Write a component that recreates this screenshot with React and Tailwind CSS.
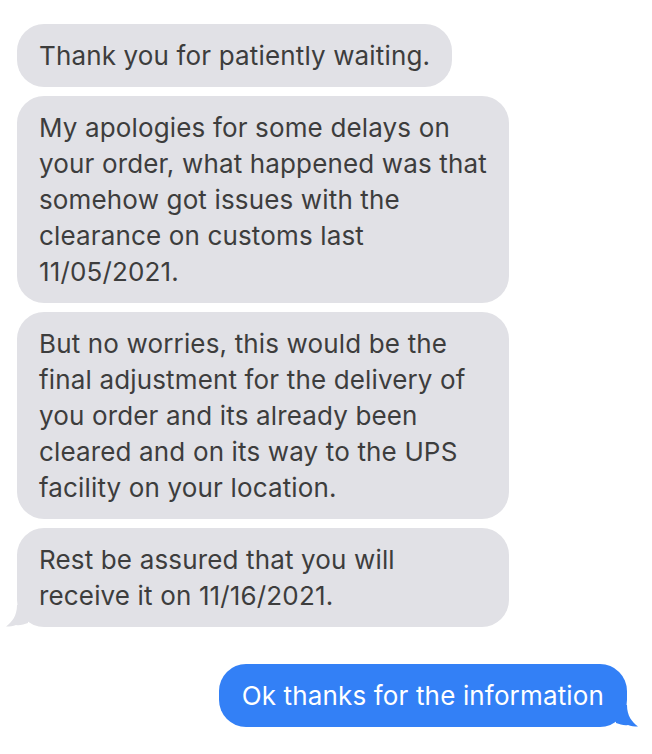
import React from "react";

const incoming = [
  ["Thank you for patiently waiting."],
  [
    "My apologies for some delays on",
    "your order, what happened was that",
    "somehow got issues with the",
    "clearance on customs last",
    "11/05/2021.",
  ],
  [
    "But no worries, this would be the",
    "final adjustment for the delivery of",
    "you order and its already been",
    "cleared and on its way to the UPS",
    "facility on your location.",
  ],
  ["Rest be assured that you will", "receive it on 11/16/2021."],
];

const GrayTail = () => (
  <svg
    className="absolute -left-[11px] bottom-0"
    width="26"
    height="22"
    viewBox="0 0 26 22"
  >
    <path
      d="M11 0 L22 0 L22 18 C18 19 14 21 10 20 C7 21 4 21.5 0 21.5 C6 17 11 11 11 0 Z"
      fill="#e1e1e6"
    />
  </svg>
);

const BlueTail = () => (
  <svg
    className="absolute -right-[11px] bottom-0"
    width="26"
    height="22"
    viewBox="0 0 26 22"
  >
    <path
      d="M15 0 L4 0 L4 18 C8 19 12 21 16 20 C19 21 22 21.5 26 21.5 C20 17 15 11 15 0 Z"
      fill="#3380f6"
    />
  </svg>
);

export default function App() {
  return (
    <div
      className="w-[652px] h-[754px] bg-white overflow-hidden"
      style={{ fontFamily: "Inter, 'Noto Sans', sans-serif" }}
    >
      <div className="flex flex-col gap-[9px] pt-[24px] pl-[17px]">
        {incoming.map((lines, i) => (
          <div
            key={i}
            className={`relative bg-[#e1e1e6] rounded-[27px] px-[22px] py-[13.5px] text-[26px] tracking-[0.15px] leading-[36px] text-[#3d3d3d] whitespace-nowrap ${
              lines.length > 1 ? "w-[492px]" : "w-fit"
            }`}
          >
            {lines.map((l, j) => (
              <div key={j}>{l}</div>
            ))}
            {i === incoming.length - 1 && <GrayTail />}
          </div>
        ))}
      </div>
      <div className="flex justify-end pr-[25px] mt-[37px]">
        <div className="relative w-fit bg-[#3380f6] rounded-[27px] px-[23px] py-[13.5px] text-[26px] tracking-[0.15px] leading-[36px] text-white whitespace-nowrap">
          Ok thanks for the information
          <BlueTail />
        </div>
      </div>
    </div>
  );
}
